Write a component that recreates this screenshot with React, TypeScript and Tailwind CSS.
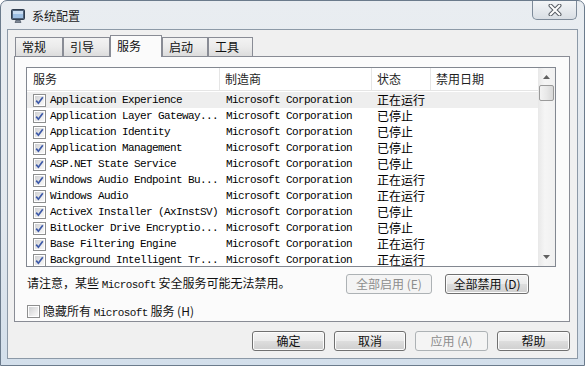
import React from 'react';

const cjk = "font-['Noto_Sans_CJK_SC',sans-serif]";
const mono = "font-['Liberation_Mono',monospace] text-[11px] tracking-[-0.6px] whitespace-pre";

const rows: [string, string][] = [
  ['Application Experience', '正在运行'],
  ['Application Layer Gateway...', '已停止'],
  ['Application Identity', '已停止'],
  ['Application Management', '已停止'],
  ['ASP.NET State Service', '已停止'],
  ['Windows Audio Endpoint Bu...', '正在运行'],
  ['Windows Audio', '正在运行'],
  ['ActiveX Installer (AxInstSV)', '已停止'],
  ['BitLocker Drive Encryptio...', '已停止'],
  ['Base Filtering Engine', '正在运行'],
  ['Background Intelligent Tr...', '正在运行'],
];

const CheckBox: React.FC<{ checked?: boolean }> = ({ checked = true }) => (
  <span className="w-[13px] h-[13px] shrink-0 border border-[#8e8f8f] bg-white p-px flex">
    <span className="flex-1 bg-[linear-gradient(135deg,#cfd0d2_0%,#eeeeee_70%,#f8f8f8_100%)] flex items-center justify-center">
      {checked && (
        <svg width="9" height="9" viewBox="0 0 9 9">
          <path d="M1.2 4.6 L3.4 7.2 L7.8 1.2" stroke="#3f5ba9" strokeWidth="1.7" fill="none" />
        </svg>
      )}
    </span>
  </span>
);

const Btn: React.FC<{ children: React.ReactNode; w: string; disabled?: boolean }> = ({ children, w, disabled }) => (
  <button
    className={
      disabled
        ? `${w} h-[20px] rounded-[3px] border border-[#adb2b5] bg-[#f4f4f4] text-[#8d8d8d] text-[12px] flex items-center justify-center ${cjk}`
        : `${w} h-[20px] rounded-[3px] border border-[#707070] bg-[linear-gradient(180deg,#f4f4f4_0%,#ebebeb_48%,#dddddd_52%,#cfcfcf_100%)] text-[#111] text-[12px] flex items-center justify-center shadow-[inset_0_0_0_1px_#fcfcfc] ${cjk}`
    }
  >
    {children}
  </button>
);

const Tab: React.FC<{ label: string; w: string; active?: boolean }> = ({ label, w, active }) =>
  active ? (
    <div className={`${w} h-[22px] -mb-px relative z-10 border border-b-0 border-[#898c95] bg-[#fbfbfb] pl-[6px] pb-[2px] flex items-center text-[12px] text-[#111] ${cjk}`}>
      {label}
    </div>
  ) : (
    <div className={`${w} h-[19px] border border-b-0 border-[#898c95] bg-[linear-gradient(180deg,#f3f3f3_0%,#ebebeb_50%,#dcdcdc_100%)] pl-[6px] flex items-center text-[12px] text-[#111] ${cjk}`}>
      {label}
    </div>
  );

export default function App() {
  return (
    <div className="w-[585px] h-[366px] border border-[#6b7b8c] rounded-t-[7px] bg-[linear-gradient(180deg,#e9edf1_0%,#e2e8ee_60%,#d3dfeb_100%)] flex flex-col overflow-hidden">
      {/* title bar */}
      <div className="h-[28px] flex items-start shrink-0">
        <div className="flex items-center pl-[9px] pt-[6px]">
          <svg width="16" height="16" viewBox="0 0 16 16">
            <rect x="1.5" y="1.5" width="13" height="10" rx="1" fill="#4f627a" stroke="#2f3d4f" />
            <rect x="3" y="3" width="10" height="7" fill="#9ec0e4" />
            <rect x="3" y="3" width="10" height="3" fill="#c8dcf1" />
            <path d="M6 12 L10 12 L11 14.5 L5 14.5 Z" fill="#7d8896" stroke="#3d4755" strokeWidth="0.6" />
          </svg>
          <span className={`ml-[6px] text-[12px] text-[#1b1b1b] ${cjk}`}>系统配置</span>
        </div>
        <div className="ml-auto mr-[7px] w-[45px] h-[19px] rounded-b-[5px] border border-t-0 border-[#7d8a99] bg-[linear-gradient(180deg,#f3f5f7_0%,#e6eaee_50%,#d9dee4_100%)] flex items-center justify-center">
          <svg width="14" height="12" viewBox="0 0 14 12">
            <path d="M2.5 1.5 L11.5 10.5 M11.5 1.5 L2.5 10.5" stroke="#5a5f66" strokeWidth="4" strokeLinecap="round" />
            <path d="M2.5 1.5 L11.5 10.5 M11.5 1.5 L2.5 10.5" stroke="#ffffff" strokeWidth="2" strokeLinecap="round" />
          </svg>
        </div>
      </div>

      {/* client area */}
      <div className="flex-1 mx-[6px] mb-[6px] border border-[#8c99a7] bg-[#f0f0f0] flex flex-col pt-[5px] pl-[6px] pr-[7px]">
        <div className="h-[21px] flex items-end pl-px">
          <Tab label="常规" w="w-[48px]" />
          <Tab label="引导" w="w-[47px]" />
          <Tab label="服务" w="w-[52px]" active />
          <Tab label="启动" w="w-[46px]" />
          <Tab label="工具" w="w-[45px]" />
        </div>

        {/* tab page */}
        <div className="h-[266px] border border-[#898c95] bg-[#fbfbfb] pt-[10px] pl-[11px] pr-[13px] flex flex-col">
          <div className="h-[203px] border border-[#828790] bg-white flex overflow-hidden">
            <div className="flex-1 flex flex-col overflow-hidden">
              <div className={`h-[23px] shrink-0 flex border-b border-[#e5e5e5] text-[12px] text-[#1e1e1e] ${cjk}`}>
                <div className="w-[193px] pl-[6px] flex items-center border-r border-[#e5e5e5]">服务</div>
                <div className="w-[152px] pl-[5px] flex items-center border-r border-[#e5e5e5]">制造商</div>
                <div className="w-[59px] pl-[5px] flex items-center border-r border-[#e5e5e5]">状态</div>
                <div className="flex-1 pl-[5px] flex items-center">禁用日期</div>
              </div>
              <div className="pt-px">
                {rows.map(([name, status], i) => (
                  <div key={i} className={`h-[16px] leading-[16px] flex items-center ${i === 0 ? 'bg-[#eeeeee]' : ''}`}>
                    <div className="w-[193px] pl-[6px] flex items-center overflow-hidden">
                      <CheckBox />
                      <span className={`ml-[4px] text-black ${mono}`}>{name}</span>
                    </div>
                    <div className={`w-[152px] pl-[6px] text-black ${mono}`}>Microsoft Corporation</div>
                    <div className={`w-[59px] pl-[5px] text-[12px] leading-[16px] text-black ${cjk}`}>{status}</div>
                    <div className="flex-1" />
                  </div>
                ))}
                <div className="h-[16px] flex items-center pl-[6px]">
                  <CheckBox />
                </div>
              </div>
            </div>
            {/* scrollbar */}
            <div className="w-[17px] shrink-0 bg-[linear-gradient(90deg,#e8e8e8_0%,#f5f5f5_40%,#f0f0f0_100%)] flex flex-col items-center">
              <div className="h-[17px] flex items-center justify-center">
                <svg width="7" height="4" viewBox="0 0 7 4">
                  <path d="M0 4 L3.5 0 L7 4 Z" fill="#606060" />
                </svg>
              </div>
              <div className="w-[15px] h-[16px] rounded-[2px] border border-[#9a9a9a] bg-[linear-gradient(90deg,#f3f3f3_0%,#e8e8e8_50%,#d8d8d8_100%)]" />
              <div className="flex-1" />
              <div className="h-[17px] flex items-center justify-center">
                <svg width="7" height="4" viewBox="0 0 7 4">
                  <path d="M0 0 L7 0 L3.5 4 Z" fill="#606060" />
                </svg>
              </div>
            </div>
          </div>

          <div className="mt-[7px] h-[21px] flex items-center">
            <span className={`pl-px text-[12px] text-[#111] ${cjk}`}>
              请注意，某些 <span className={mono}>Microsoft</span> 安全服务可能无法禁用。
            </span>
            <div className="ml-auto mr-[27px] flex gap-[13px]">
              <Btn w="w-[86px]" disabled>
                全部启用 (E)
              </Btn>
              <Btn w="w-[84px]">全部禁用 (D)</Btn>
            </div>
          </div>

          <div className="mt-[7px] flex items-center pl-px">
            <CheckBox checked={false} />
            <span className={`ml-[3px] text-[12px] text-[#111] ${cjk}`}>
              隐藏所有 <span className={mono}>Microsoft</span> 服务 (H)
            </span>
          </div>
        </div>

        {/* dialog buttons */}
        <div className="mt-[9px] flex justify-end gap-[9px]">
          <Btn w="w-[73px]">确定</Btn>
          <Btn w="w-[72px]">取消</Btn>
          <Btn w="w-[73px]" disabled>
            应用 (A)
          </Btn>
          <Btn w="w-[73px]">帮助</Btn>
        </div>
      </div>
    </div>
  );
}
